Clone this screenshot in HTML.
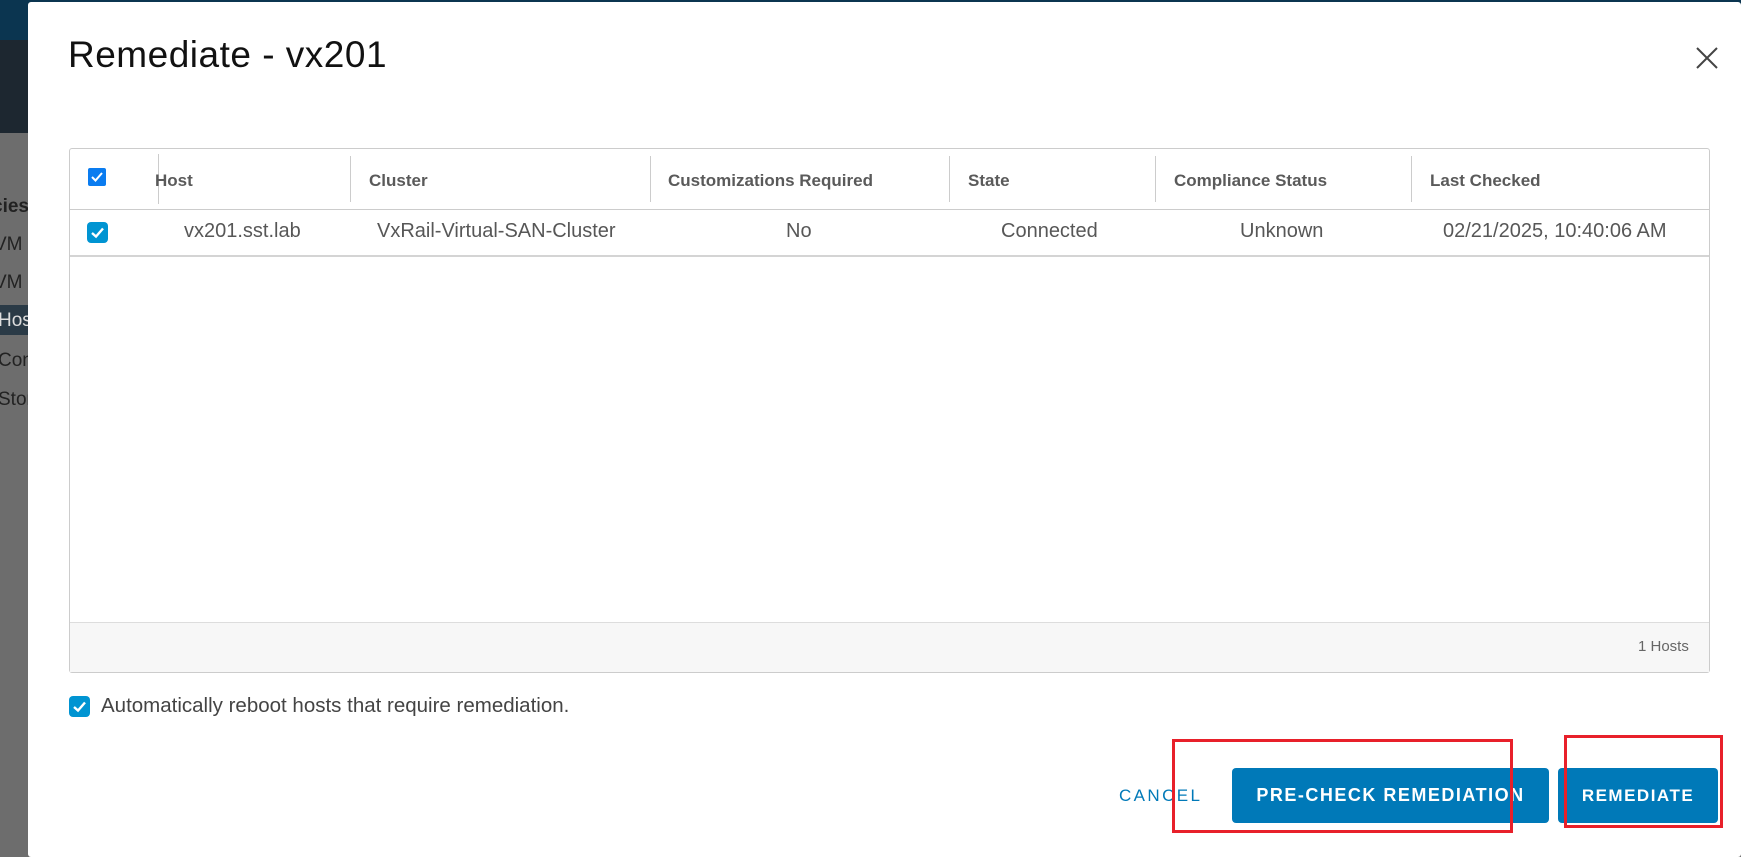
<!DOCTYPE html>
<html><head><meta charset="utf-8"><style>
*{box-sizing:border-box;margin:0;padding:0}
body{width:1741px;height:857px;position:relative;overflow:hidden;font-family:"Liberation Sans",sans-serif;background:#6e6e6e}
.a{position:absolute}
.hd{font-size:17px;font-weight:bold;color:#5a5a5a;top:171px}
.dt{font-size:20px;color:#575757;top:220px}
.sep{width:1px;background:#ccc;top:156px;height:46px}
.cb{width:21px;height:21px;border-radius:4px;background:#0094d2}
.cb svg{position:absolute;left:3px;top:3px}
.btn{background:#0079b8;color:#fff;font-size:17px;font-weight:bold;letter-spacing:1.5px;border-radius:4px;text-align:center;line-height:55px;top:768px;height:55px}
.side{left:0;font-size:19px;color:#222}
</style></head><body>
<div class="a" style="left:0;top:0;width:1741px;height:40px;background:#0b3550"></div>
<div class="a" style="left:0;top:40px;width:30px;height:93px;background:#1d2730"></div>
<div class="a" style="left:0;top:133px;width:30px;height:724px;background:#6d6d6d"></div>
<div class="a" style="left:0;top:305px;width:30px;height:30px;background:#2a3a46"></div>
<div class="a side" style="left:-8px;top:196px;font-weight:bold">cies</div>
<div class="a side" style="left:-6px;top:234px">VM</div>
<div class="a side" style="left:-6px;top:272px">VM</div>
<div class="a side" style="left:-2px;top:310px;color:#ddd">Hos</div>
<div class="a side" style="left:-2px;top:350px">Con</div>
<div class="a side" style="left:-2px;top:389px">Stor</div>
<div class="a" style="left:28px;top:2px;width:1713px;height:855px;background:#fff;border-radius:3px"></div>
<div class="a" style="left:68px;top:34px;font-size:37px;color:#111;letter-spacing:0.5px">Remediate - vx201</div>
<svg class="a" style="left:1696px;top:47px" width="22" height="22" viewBox="0 0 22 22"><path d="M1 1L21 21M21 1L1 21" stroke="#444" stroke-width="2"/></svg>
<div class="a" style="left:69px;top:148px;width:1641px;height:525px;border:1px solid #ccc;border-radius:3px"></div>
<div class="a" style="left:70px;top:209px;width:1639px;height:1px;background:#ccc"></div>
<div class="a" style="left:70px;top:255px;width:1639px;height:2px;background:#d4d4d4"></div>
<div class="a" style="left:70px;top:622px;width:1639px;height:50px;background:#f7f7f7;border-top:1px solid #ddd"></div>
<div class="a" style="left:1638px;top:638px;font-size:15px;color:#666">1 Hosts</div>
<div class="a cb" style="left:88px;top:168px;width:18px;height:18px;border-radius:2px;background:#0a7cf0"><svg width="12" height="12" viewBox="0 0 12 12" style="left:3px;top:3px"><path d="M1 6L4.5 9.5L11 2" stroke="#fff" stroke-width="2" fill="none"/></svg></div>
<div class="a sep" style="left:158px;top:154px;height:50px"></div>
<div class="a sep" style="left:350px"></div><div class="a sep" style="left:650px"></div><div class="a sep" style="left:949px"></div><div class="a sep" style="left:1155px"></div><div class="a sep" style="left:1411px"></div>
<div class="a hd" style="left:155px">Host</div>
<div class="a hd" style="left:369px">Cluster</div>
<div class="a hd" style="left:668px">Customizations Required</div>
<div class="a hd" style="left:968px">State</div>
<div class="a hd" style="left:1174px">Compliance Status</div>
<div class="a hd" style="left:1430px">Last Checked</div>
<div class="a cb" style="left:87px;top:222px"><svg width="15" height="15" viewBox="0 0 15 15"><path d="M2 8L6 11.5L13 3.5" stroke="#fff" stroke-width="2.4" fill="none"/></svg></div>
<div class="a dt" style="left:184px">vx201.sst.lab</div>
<div class="a dt" style="left:377px">VxRail-Virtual-SAN-Cluster</div>
<div class="a dt" style="left:786px">No</div>
<div class="a dt" style="left:1001px">Connected</div>
<div class="a dt" style="left:1240px">Unknown</div>
<div class="a dt" style="left:1443px">02/21/2025, 10:40:06 AM</div>
<div class="a cb" style="left:69px;top:696px"><svg width="15" height="15" viewBox="0 0 15 15"><path d="M2 8L6 11.5L13 3.5" stroke="#fff" stroke-width="2.4" fill="none"/></svg></div>
<div class="a" style="left:101px;top:694px;font-size:20.5px;color:#444">Automatically reboot hosts that require remediation.</div>
<div class="a" style="left:1119px;top:786px;font-size:17px;color:#0079b8;letter-spacing:2.4px">CANCEL</div>
<div class="a btn" style="left:1232px;width:317px;font-size:18px">PRE-CHECK REMEDIATION</div>
<div class="a btn" style="left:1558px;width:160px">REMEDIATE</div>
<div class="a" style="left:1172px;top:739px;width:341px;height:94px;border:3px solid #e8202a"></div>
<div class="a" style="left:1564px;top:735px;width:159px;height:93px;border:3px solid #e8202a"></div>
</body></html>
